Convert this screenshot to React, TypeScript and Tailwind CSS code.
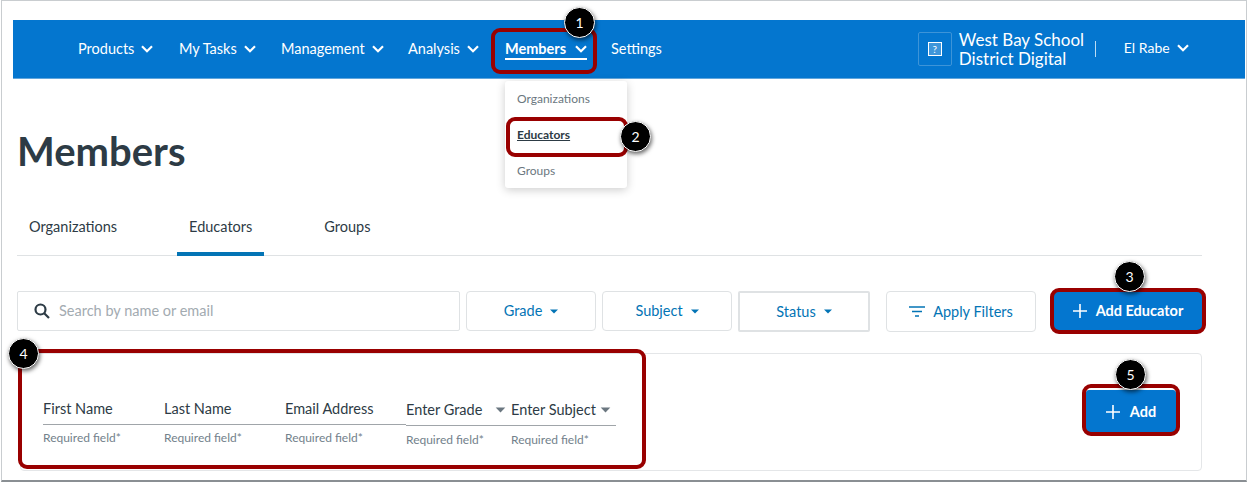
import React from "react";

const Chevron = ({ className = "" }: { className?: string }) => (
  <svg viewBox="0 0 12 8" className={`w-[12px] h-[8px] ${className}`} fill="none" stroke="currentColor" strokeWidth="2.2">
    <path d="M1 1.2 L6 6.2 L11 1.2" />
  </svg>
);

const Caret = ({ className = "" }: { className?: string }) => (
  <svg viewBox="0 0 8 5" className={`w-[8px] h-[5px] ${className}`} fill="currentColor">
    <path d="M0 0.5 H8 L4 4.5 Z" />
  </svg>
);

const Plus = ({ size = 14 }: { size?: number }) => (
  <svg width={size} height={size} viewBox="0 0 14 14" fill="none" stroke="currentColor" strokeWidth="1.6">
    <path d="M7 0 V14 M0 7 H14" />
  </svg>
);

const Badge = ({ n, className }: { n: number; className: string }) => (
  <div
    className={`absolute w-[31px] h-[31px] rounded-full bg-black border border-white text-white flex items-center justify-center text-[14px] shadow-[1px_2px_4px_rgba(0,0,0,0.6)] z-20 ${className}`}
  >
    {n}
  </div>
);

const Mark = ({ className }: { className: string }) => (
  <div className={`absolute border-[4px] border-[#990000] rounded-[9px] z-10 pointer-events-none ${className}`} />
);

const navItems = [
  { label: "Products", w: "w-[101px]" },
  { label: "My Tasks", w: "w-[102px]" },
  { label: "Management", w: "w-[127px]" },
  { label: "Analysis", w: "w-[97px]" },
];

const Field = ({ label, w, select, top }: { label: string; w: string; select?: boolean; top?: boolean }) => (
  <div className={w}>
    <div className="h-[31px] flex items-center justify-between border-b border-[#a0a5a9] text-[14.5px] text-[#2d3b45] pr-[3px]">
      <span>{label}</span>
      {select && <Caret className="w-[11px] h-[6px] text-[#6b7780] mr-[2px]" />}
    </div>
    <div className={`text-[12px] text-[#73818b] leading-[15px] ${top ? "mt-[5px]" : "mt-[6px]"}`}>Required field*</div>
  </div>
);

const FilterBtn = ({ label, className }: { label: string; className: string }) => (
  <button className={`h-[40px] flex items-center justify-center gap-[8px] bg-white text-[14.5px] text-[#0374b5] ${className}`}>
    {label}
    <Caret />
  </button>
);

export default function App() {
  return (
    <div
      className="relative w-[1250px] h-[484px] bg-white overflow-hidden"
      style={{ fontFamily: "Lato, 'Noto Sans', sans-serif" }}
    >
      <div className="absolute left-[1px] top-0 w-[1246px] h-[482px] border border-[#c9cdd0] border-b-[#8a8f93] border-b-2 pointer-events-none" />

      <div className="pt-[20px] pl-[13px] pr-[5px]">
        {/* nav */}
        <header className="h-[59px] bg-[#0476cf] border-b border-[#62a6dc] text-white flex items-center pl-[65px]">
          {navItems.map((n) => (
            <div key={n.label} className={`flex items-center gap-[7px] text-[14.5px] ${n.w}`}>
              {n.label}
              <Chevron />
            </div>
          ))}
          <div className="relative w-[106px] flex items-center gap-[9px] text-[14.5px] font-bold">
            Members
            <Chevron />
            <div className="absolute left-0 top-[20px] w-[82px] h-[2px] bg-white" />
          </div>
          <div className="text-[14.5px]">Settings</div>
          <div className="ml-[256px] w-[34px] h-[34px] border border-[#3d94d8] rounded-[2px] flex items-center justify-center">
            <div className="w-[14px] h-[14px] border border-white bg-[#3f96da] flex items-center justify-center text-[10px] leading-none">?</div>
          </div>
          <div className="ml-[7px] w-[136px] text-[17px] leading-[19px]">
            West Bay School
            <br />
            District Digital
          </div>
          <div className="w-px h-[16px] bg-[#bcdcf3]" />
          <div className="ml-[28px] flex items-center gap-[7px] text-[14px] -mt-[3px]">
            El Rabe
            <Chevron />
          </div>
        </header>

        {/* main */}
        <main className="pl-[4px] w-[1189px]">
          <h1 className="mt-[46px] text-[40px] leading-[52px] font-bold text-[#2d3b45]">Members</h1>
          <nav className="mt-[28px] h-[51px] border-b border-[#dfe2e4] flex gap-[48px] text-[14.5px] text-[#2d3b45]">
            <div className="px-3 pt-[11px]">Organizations</div>
            <div className="px-3 pt-[11px] h-[51px] border-b-[4px] border-[#0374b5]">Educators</div>
            <div className="px-3 pt-[11px]">Groups</div>
          </nav>

          {/* toolbar */}
          <div className="mt-[35px] flex items-start">
            <div className="w-[443px] h-[40px] border border-[#dfe2e4] rounded-[2px] flex items-center pl-[16px] gap-[9px] text-[14.5px] text-[#a3abb1]">
              <svg width="16" height="16" viewBox="0 0 16 16" fill="none" stroke="#2d3b45" strokeWidth="2.2">
                <circle cx="6.5" cy="6.5" r="5" />
                <path d="M10 10 L15 15" />
              </svg>
              Search by name or email
            </div>
            <FilterBtn label="Grade" className="ml-[6px] w-[130px] border border-[#dfe2e4] rounded-[4px]" />
            <FilterBtn label="Subject" className="ml-[6px] w-[130px] border border-[#dfe2e4] rounded-[4px]" />
            <FilterBtn
              label="Status"
              className="ml-[6px] w-[132px] h-[41px] border-[2px] border-[#dfe2e4] rounded-[2px]"
            />
            <button className="ml-[16px] w-[150px] h-[41px] border border-[#dfe2e4] rounded-[4px] flex items-center justify-center gap-[8px] text-[14.5px] text-[#0374b5]">
              <svg width="16" height="12" viewBox="0 0 16 12" fill="none" stroke="currentColor" strokeWidth="1.6">
                <path d="M0 1 H16 M3 5.5 H13 M6 10 H10" />
              </svg>
              Apply Filters
            </button>
            <button className="ml-[18px] w-[148px] h-[38px] mt-[1px] bg-[#0476cf] rounded-[3px] text-white font-bold text-[14.5px] flex items-center justify-center gap-[9px]">
              <Plus />
              Add Educator
            </button>
          </div>

          {/* card */}
          <section className="mt-[21px] ml-[3px] w-[1182px] h-[118px] border border-[#e4e6e8] rounded-[4px] flex items-center pl-[22px] pr-[25px]">
            <div className="flex mt-[16px] items-start">
              <div className="flex">
                <Field label="First Name" w="w-[121px]" top />
                <Field label="Last Name" w="w-[121px]" top />
                <Field label="Email Address" w="w-[121px]" top />
              </div>
              <div className="flex mt-[1px]">
                <Field label="Enter Grade" w="w-[105px]" select />
                <Field label="Enter Subject" w="w-[105px]" select />
              </div>
            </div>
            <button className="ml-auto w-[90px] h-[44px] bg-[#0476cf] rounded-[3px] text-white font-bold text-[14.5px] flex items-center justify-center gap-[10px]">
              <Plus />
              Add
            </button>
          </section>
        </main>
      </div>

      {/* dropdown */}
      <div className="absolute left-[505px] top-[81px] w-[122px] h-[107px] bg-white rounded-[3px] shadow-[0_2px_10px_rgba(0,0,0,0.2)] text-[12px] text-[#6b7780] pl-[12px]">
        <div className="h-[36px] flex items-center">Organizations</div>
        <div className="h-[36px] flex items-center font-bold text-[#2d3b45] underline">Educators</div>
        <div className="h-[36px] flex items-center">Groups</div>
      </div>

      <Mark className="left-[491px] top-[28px] w-[106px] h-[46px]" />
      <Mark className="left-[506px] top-[117px] w-[122px] h-[40px]" />
      <Mark className="left-[1050px] top-[288px] w-[156px] h-[46px]" />
      <Mark className="left-[18px] top-[349px] w-[628px] h-[120px]" />
      <Mark className="left-[1082px] top-[384px] w-[98px] h-[52px]" />

      <Badge n={1} className="left-[564px] top-[7px]" />
      <Badge n={2} className="left-[620px] top-[121px]" />
      <Badge n={3} className="left-[1114px] top-[261px]" />
      <Badge n={4} className="left-[8px] top-[338px]" />
      <Badge n={5} className="left-[1115px] top-[359px]" />
    </div>
  );
}
